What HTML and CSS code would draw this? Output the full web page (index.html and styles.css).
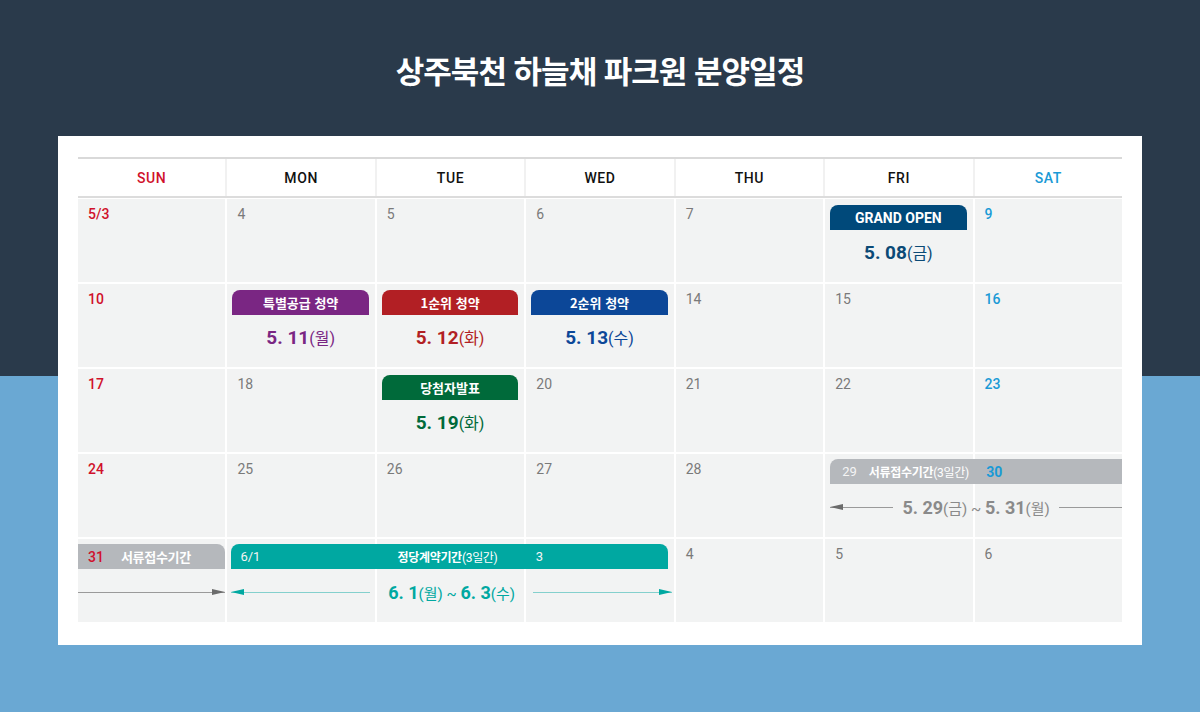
FILE: index.html
```html
<!DOCTYPE html>
<html lang="ko">
<head>
<meta charset="utf-8">
<title>상주북천 하늘채 파크원 분양일정</title>
<link rel="stylesheet" href="styles.css">
</head>
<body>
<div class="page">
  <header class="top">
    <h1 class="title">상주북천 하늘채 파크원 분양일정</h1>
  </header>
  <section class="card">
    <div class="head">
      <div class="hcell sun">SUN</div>
      <div class="hcell">MON</div>
      <div class="hcell">TUE</div>
      <div class="hcell">WED</div>
      <div class="hcell">THU</div>
      <div class="hcell">FRI</div>
      <div class="hcell sat">SAT</div>
    </div>
    <div class="body">
      <div class="week">
        <div class="cell"><span class="day sun">5/3</span></div>
        <div class="cell"><span class="day">4</span></div>
        <div class="cell"><span class="day">5</span></div>
        <div class="cell"><span class="day">6</span></div>
        <div class="cell"><span class="day">7</span></div>
        <div class="cell ev">
          <div class="badge navy en">GRAND OPEN</div>
          <div class="date c-navy"><b>5. 08</b>(금)</div>
        </div>
        <div class="cell"><span class="day sat">9</span></div>
      </div>
      <div class="week">
        <div class="cell"><span class="day sun">10</span></div>
        <div class="cell ev">
          <div class="badge purple">특별공급 청약</div>
          <div class="date c-purple"><b>5. 11</b>(월)</div>
        </div>
        <div class="cell ev">
          <div class="badge red">1순위 청약</div>
          <div class="date c-red"><b>5. 12</b>(화)</div>
        </div>
        <div class="cell ev">
          <div class="badge blue">2순위 청약</div>
          <div class="date c-blue"><b>5. 13</b>(수)</div>
        </div>
        <div class="cell"><span class="day">14</span></div>
        <div class="cell"><span class="day">15</span></div>
        <div class="cell"><span class="day sat">16</span></div>
      </div>
      <div class="week">
        <div class="cell"><span class="day sun">17</span></div>
        <div class="cell"><span class="day">18</span></div>
        <div class="cell ev">
          <div class="badge green">당첨자발표</div>
          <div class="date c-green"><b>5. 19</b>(화)</div>
        </div>
        <div class="cell"><span class="day">20</span></div>
        <div class="cell"><span class="day">21</span></div>
        <div class="cell"><span class="day">22</span></div>
        <div class="cell"><span class="day sat">23</span></div>
      </div>
      <div class="week">
        <div class="cell"><span class="day sun">24</span></div>
        <div class="cell"><span class="day">25</span></div>
        <div class="cell"><span class="day">26</span></div>
        <div class="cell"><span class="day">27</span></div>
        <div class="cell"><span class="day">28</span></div>
        <div class="cell"></div>
        <div class="cell"></div>
        <div class="span span-doc1">
          <div class="bar gray r-left">
            <div class="part1"><span class="bn">29</span><span class="bt"><b>서류접수기간</b>(3일간)</span></div>
            <span class="bn bsat">30</span>
          </div>
          <div class="arow gray-arrow">
            <span class="line to-left"></span>
            <span class="adate"><b>5. 29</b>(금) ~ <b>5. 31</b>(월)</span>
            <span class="line"></span>
          </div>
        </div>
      </div>
      <div class="week">
        <div class="cell"></div>
        <div class="cell"></div>
        <div class="cell"></div>
        <div class="cell"></div>
        <div class="cell"><span class="day">4</span></div>
        <div class="cell"><span class="day">5</span></div>
        <div class="cell"><span class="day">6</span></div>
        <div class="span span-doc2">
          <div class="bar gray r-right">
            <span class="bn bsun">31</span><span class="bt bt13"><b>서류접수기간</b></span>
          </div>
          <div class="arow gray-arrow">
            <span class="line to-right"></span>
          </div>
        </div>
        <div class="span span-contract">
          <div class="bar teal r-both">
            <span class="bn c1">6/1</span>
            <span class="bt bt-mid"><b>정당계약기간</b>(3일간)</span>
            <span class="bn n3">3</span>
          </div>
          <div class="arow teal-arrow wide">
            <span class="line to-left"></span>
            <span class="adate"><b>6. 1</b>(월) ~ <b>6. 3</b>(수)</span>
            <span class="line to-right"></span>
          </div>
        </div>
      </div>
    </div>
  </section>
</div>
</body>
</html>
```

FILE: styles.css
```css
* { box-sizing: border-box; margin: 0; padding: 0; }
html, body { width: 1200px; height: 712px; overflow: hidden; }
body { font-family: Roboto, "Noto Sans CJK KR", sans-serif; }

.page {
  height: 712px;
  background: linear-gradient(to bottom, #2a3a4b 0, #2a3a4b 376px, #6aa8d3 376px, #6aa8d3 100%);
}

.top {
  height: 136px;
  display: flex;
  align-items: center;
  justify-content: center;
  padding-top: 2px;
}
.title {
  color: #fff;
  font-family: "Noto Sans CJK KR", sans-serif;
  font-weight: 700;
  font-size: 31px;
  letter-spacing: -1px;
  line-height: 1;
}

.card {
  margin: 0 58px;
  background: #fff;
  padding: 21px 20px 23px;
}

.head {
  display: grid;
  grid-template-columns: repeat(7, minmax(0, 1fr));
  column-gap: 2px;
  background: #f1f1f1;
  border-top: 2px solid #d9d9d9;
  border-bottom: 2px solid #dcdcdc;
  margin-bottom: 1px;
}
.hcell {
  background: #fff;
  height: 37px;
  display: flex;
  align-items: center;
  justify-content: center;
  font-size: 14px;
  font-weight: 500;
  letter-spacing: 0.6px;
  color: #111;
}
.hcell.sun { color: #d0112b; }
.hcell.sat { color: #1a9ad6; }

.body { display: flex; flex-direction: column; gap: 2px; }
.week {
  display: grid;
  grid-template-columns: repeat(7, minmax(0, 1fr));
  column-gap: 2px;
  height: 83px;
}
.cell { grid-row: 1; background: #f2f3f3; padding: 5px 10px 0; }
.cell:nth-child(1) { grid-column: 1; }
.cell:nth-child(2) { grid-column: 2; }
.cell:nth-child(3) { grid-column: 3; }
.cell:nth-child(4) { grid-column: 4; }
.cell:nth-child(5) { grid-column: 5; }
.cell:nth-child(6) { grid-column: 6; }
.cell:nth-child(7) { grid-column: 7; }

.day { font-size: 14px; line-height: 16px; color: #7a7a7a; }
.day.sun { color: #d0112b; font-weight: 500; }
.day.sat { color: #1a9ad6; font-weight: 500; }

.cell.ev { padding: 6px 6px 0 5px; }
.badge {
  height: 25px;
  border-radius: 8px 8px 0 0;
  color: #fff;
  font-family: "Noto Sans CJK KR", sans-serif;
  font-weight: 700;
  font-size: 13px;
  display: flex;
  align-items: center;
  justify-content: center;
}
.badge.en { font-family: Roboto, sans-serif; font-size: 14px; }
.navy { background: #00497a; }
.purple { background: #7a2683; }
.red { background: #b21f24; }
.blue { background: #0c4798; }
.green { background: #006a3a; }

.date {
  margin-top: 12px;
  line-height: 22px;
  text-align: center;
  font-size: 16px;
}
.date b { font-size: 19px; font-weight: 700; }
.c-navy { color: #0b4a76; }
.c-purple { color: #7a2683; }
.c-red { color: #b21f24; }
.c-blue { color: #0c4798; }
.c-green { color: #006a3a; }

/* spanning events */
.span {
  grid-row: 1;
  align-self: start;
  margin-top: 5px;
  z-index: 1;
}
.span-doc1 { grid-column: 6 / 8; margin-left: 5px; }
.span-doc2 { grid-column: 1 / 2; }
.span-contract { grid-column: 2 / 5; margin-left: 4px; margin-right: 2px; }

.bar {
  height: 25px;
  display: flex;
  align-items: center;
  color: #fff;
  font-size: 12px;
  font-family: Roboto, "Noto Sans CJK KR", sans-serif;
  padding-left: 12px;
}
.bar.gray { background: #b5b8bc; }
.bar.teal { background: #00a8a1; margin-right: 4px; padding-left: 9px; }
.r-left { border-radius: 8px 0 0 0; }
.r-right { border-radius: 0 8px 0 0; padding-left: 10px; }
.r-both { border-radius: 8px 8px 0 0; }

.part1 { width: 144px; display: flex; align-items: center; }
.bn { font-size: 13px; color: #f4f4f4; }
.bt { margin-left: 12px; letter-spacing: -0.3px; }
.bt b { font-weight: 700; font-size: 12px; }
.bt13 { margin-left: 17px; }
.bt13 b { font-size: 13px; }
.bsat { color: #1a9ad6; font-weight: 700; font-size: 14px; }
.bsun { color: #d0112b; font-weight: 500; font-size: 14px; }
.c1 { width: 136px; }
.bt-mid { margin-left: 21px; flex: 1; }
.n3 { width: 132px; }

.arow {
  display: flex;
  align-items: center;
  gap: 9px;
  margin-top: 12px;
  height: 22px;
}
.arow.wide { gap: 18px; }
.line { flex: 1; height: 1px; background: #9a9a9a; position: relative; }
.teal-arrow .line { background: #84d0cd; }
.line.to-left::before,
.line.to-right::after {
  content: "";
  position: absolute;
  top: -3px;
  border-top: 3.5px solid transparent;
  border-bottom: 3.5px solid transparent;
}
.line.to-left::before { left: 0; border-right: 13px solid #6b6b6b; }
.line.to-right::after { right: 0; border-left: 13px solid #6b6b6b; }
.teal-arrow .line.to-left::before { border-right-color: #00a8a1; }
.teal-arrow .line.to-right::after { border-left-color: #00a8a1; }

.adate { font-size: 15px; white-space: nowrap; }
.adate b { font-size: 18px; font-weight: 700; }
.gray-arrow .adate { color: #8a8a8a; }
.teal-arrow .adate { color: #00a8a1; }
```
